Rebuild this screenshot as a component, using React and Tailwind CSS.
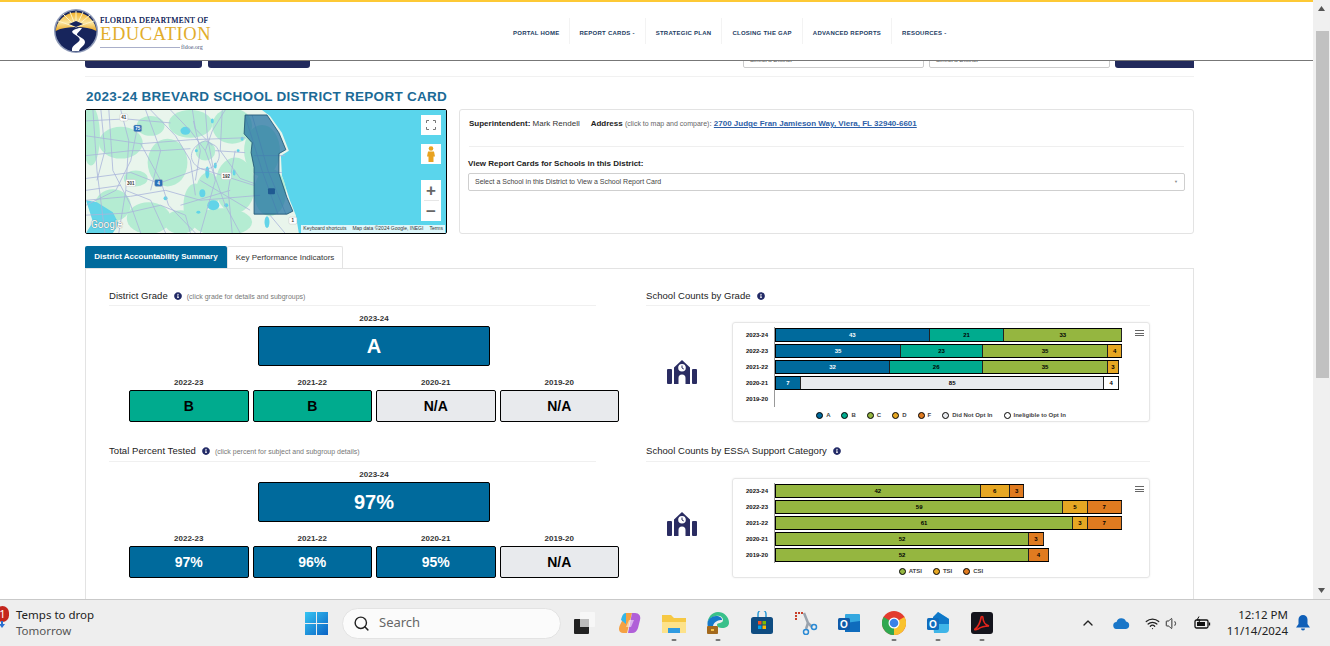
import React from 'react';
import { ChevronUp, Search, Volume1, Wifi } from 'lucide-react';
import { FaInfoCircle } from 'react-icons/fa';

const BLUE = 'bg-[#006a9c] text-white';
const TEAL = 'bg-[#00ab8e] text-black';
const NA = 'bg-[#e8eaed] text-black';

const COLORS = {
  A: 'bg-[#006a9c] text-white',
  B: 'bg-[#00ab8e] text-black',
  C: 'bg-[#95b640] text-black',
  D: 'bg-[#e6a723] text-black',
  F: 'bg-[#e07b20] text-black',
  N: 'bg-[#e8eaed] text-black',
  W: 'bg-white text-black',
};

const gradeRows = [
  { year: '2023-24', segs: [['A', 43], ['B', 21], ['C', 33]] },
  { year: '2022-23', segs: [['A', 35], ['B', 23], ['C', 35], ['D', 4]] },
  { year: '2021-22', segs: [['A', 32], ['B', 26], ['C', 35], ['D', 3]] },
  { year: '2020-21', segs: [['A', 7], ['N', 85], ['W', 4]] },
  { year: '2019-20', segs: [] },
];

const essaRows = [
  { year: '2023-24', segs: [['C', 42], ['D', 6], ['F', 3]] },
  { year: '2022-23', segs: [['C', 59], ['D', 5], ['F', 7]] },
  { year: '2021-22', segs: [['C', 61], ['D', 3], ['F', 7]] },
  { year: '2020-21', segs: [['C', 52], ['F', 3]] },
  { year: '2019-20', segs: [['C', 52], ['F', 4]] },
];

const gradeLegend = [
  ['A', 'A'], ['B', 'B'], ['C', 'C'], ['D', 'D'], ['F', 'F'],
  ['N', 'Did Not Opt In'], ['W', 'Ineligible to Opt In'],
];
const essaLegend = [['C', 'ATSI'], ['D', 'TSI'], ['F', 'CSI']];

function Logo() {
  return (
    <div className="flex items-start w-[157px]">
      <svg width="46" height="44" viewBox="0 0 46 44" className="shrink-0">
        <defs>
          <linearGradient id="sky" x1="0" y1="0" x2="0" y2="1">
            <stop offset="0" stopColor="#f3b12a" />
            <stop offset="0.55" stopColor="#fbe6a0" />
            <stop offset="1" stopColor="#e9a520" />
          </linearGradient>
        </defs>
        <circle cx="23" cy="22" r="22" fill="#8f9bb8" />
        <circle cx="23" cy="22" r="20.5" fill="#17255c" />
        <path d="M2.6 22a20.5 20.5 0 0 1 40.8 0c-6-3-12-4-20-4s-15 1-20.800 4z" fill="url(#sky)" />
        <path d="M23 18 L10 5 M23 18 L17 3 M23 18 V2 M23 18 L30 3 M23 18 L37 6 M23 18 L41 12 M23 18 L5 12" stroke="#fff3c4" strokeWidth="1" />
        <path d="M16 15l7-3 7 3-7 3z" fill="#17255c" />
        <path d="M26 19c-6 2-9 3-5 6s9 5 3 9-5 6-5 8h7c1-4 6-5 6-9s-9-6-8-8 3-3 5-6z" fill="#fff" />
      </svg>
      <div className="ml-[1px] w-[110px] font-['Liberation_Serif',serif] leading-none">
        <div className="mt-[8px] text-[8px] h-[8px] leading-[8px] tracking-[0.36px] text-[#1d2c5e] [text-shadow:0_0_0.3px_#1d2c5e] whitespace-nowrap">FLORIDA DEPARTMENT OF</div>
        <div className="text-[18.500px] h-[18px] leading-[18px] text-[#e2ad2b] tracking-[0.6px] whitespace-nowrap">EDUCATION</div>
        <div className="mt-[1px] flex items-center gap-[1px]">
          <div className="w-[80px] h-px bg-[#a9afc9]" />
          <div className="text-[6px] text-[#4a5578]">fldoe.org</div>
        </div>
      </div>
    </div>
  );
}

function NavItem({ label, className }) {
  return (
    <div className={`flex items-center h-[26px] pt-[4px] border-r border-[#f3f3f3] text-[6px] font-bold tracking-[0.25px] text-[#1c3b62] whitespace-nowrap ${className}`}>
      {label}
    </div>
  );
}

function MapView() {
  const roads = [
    'M92 109 L96 170 L104 233', 'M108 109 L112 170 L130 205 L140 233', 'M120 109 L128 140 L125 190 L118 233',
    'M137 125 L130 160 L115 190 L85 205', 'M170 109 L190 130 L205 150 L225 205 L240 233',
    'M205 109 L207 135 L215 180 L200 233', 'M85 135 L140 143 L190 139 L245 137', 'M85 178 L130 172 L158 183 L200 168 L254 185',
    'M85 200 L130 196 L165 190 L200 200 L260 195', 'M150 109 L175 135 L190 160 L195 195', 'M245 115 L262 170 L278 214',
    'M252 114 L268 170 L286 214', 'M222 109 L220 150 L240 178 L254 183', 'M254 155 L285 155', 'M254 172 L282 172',
    'M140 143 L160 180 L168 205 L195 233', 'M270 215 L285 233', 'M85 215 L125 213 L160 205',
    'M205 140 C 190 145 185 160 200 168 C 215 172 225 155 215 145 Z', 'M100 109 L104 150 L96 180', 'M85 155 L130 150 L160 150 L190 148',
    'M193 120 L200 150 L195 180', 'M160 205 L185 215 L190 233', 'M125 190 L150 200 L165 233', 'M215 150 L245 152',
    'M225 109 L212 130 L205 150', 'M192 109 L195 128 L212 145', 'M85 120 L125 118 L170 122', 'M180 205 L230 190',
    'M145 109 L160 150 L150 190', 'M235 150 L228 190 L232 233', 'M85 190 L120 185', 'M200 180 L250 210',
  ];
  const blobs = [
    [90, 135, 9, 30], [120, 142, 22, 16], [167, 162, 20, 24], [190, 123, 22, 14], [232, 125, 20, 18],
    [235, 185, 20, 28], [195, 205, 12, 22], [112, 205, 18, 16], [148, 218, 22, 16], [222, 222, 30, 14],
    [180, 222, 16, 12], [150, 125, 14, 10], [135, 178, 12, 8], [208, 190, 12, 18], [262, 150, 18, 26], [270, 192, 16, 24],
    [205, 150, 10, 10],
  ];
  const lakes = [
    [185, 130, 5, 4], [207, 172, 2, 6], [213, 205, 6, 5], [202, 193, 3, 4], [165, 198, 2, 2], [215, 165, 1.5, 3],
    [267, 222, 2.5, 6], [242, 138, 1.500, 2], [234, 172, 1.500, 3], [196, 150, 1.500, 1.500], [226, 205, 2, 2],
    [198, 212, 2, 1.500], [238, 150, 1.500, 1.500], [212, 120, 1.500, 2.500],
  ];
  return (
    <svg viewBox="85 109 362 124" preserveAspectRatio="none" className="block w-full h-full">
      <rect x="85" y="109" width="362" height="124" fill="#5ad5ec" />
      <g className="blur-[0.5px]">
        <path d="M85 109 L262 109 L270 115 L282 132 L289 150 L281 155 L282 175 L290 200 L296 215 L299 233 L85 233 Z" fill="#e9f5ec" />
        {blobs.map(([cx, cy, rx, ry]) => <ellipse key={`${cx}-${cy}`} cx={cx} cy={cy} rx={rx} ry={ry} fill="#b4ecd2" />)}
        {lakes.map(([cx, cy, rx, ry]) => <ellipse key={`${cx}-${cy}`} cx={cx} cy={cy} rx={rx} ry={ry} fill="#62d4e8" />)}
        <path d="M85 200 L96 202 L112 212 L118 224 L112 233 L85 233 L92 222 Z" fill="#62d4e8" />
        {roads.map((d) => <path key={d} d={d} fill="none" stroke="#a9b5da" strokeWidth="0.8" />)}
      </g>
      <path
        d="M245 114 L267 114 L279 132 L286 149 L279 153 L279 173 L287 197 L293 211 L287 214 L254 214 L254 167 L251 152 L252 142 L244 133 Z"
        fill="#1f6f9f" fillOpacity="0.72" stroke="#1c4f6e" strokeWidth="0.8"
      />
      <rect x="268" y="188" width="7" height="6" rx="1" fill="#1f5a92" />
      {[
        [119, 113, 8, '41', '#fff', '#333'], [133, 124, 8, '75', '#2a6fb8', '#fff'], [125, 179, 10, '301', '#fff', '#333'],
        [154, 179, 8, '4', '#2a6fb8', '#fff'], [221, 172, 10, '192', '#fff', '#333'], [289, 217, 8, '1', '#fff', '#333'],
      ].map(([x, y, w, t, bg, fg]) => (
        <g key={t}>
          <rect x={x} y={y} width={w} height="7" rx="1.5" fill={bg} stroke="#bbb" strokeWidth="0.4" />
          <text x={x + w / 2} y={y + 5.2} textAnchor="middle" fontSize="4.500" fontWeight="700" fill={fg} fontFamily="Liberation Sans">{t}</text>
        </g>
      ))}
    </svg>
  );
}

function MapPanel() {
  return (
    <div className="relative w-[362px] h-[125px] shrink-0 border border-black rounded-[2px] overflow-hidden">
      <MapView />
      <div className="absolute left-[5px] bottom-[3px] text-[10px] leading-none text-white [text-shadow:0_0_1px_#555] font-['Roboto',sans-serif]">Google</div>
      <div className="absolute right-[1px] top-[115px] h-[8px] px-[2px] flex items-center gap-[6px] bg-white/80 text-[5px] text-[#333] whitespace-nowrap">
        <span>Keyboard shortcuts</span>
        <span>Map data ©2024 Google, INEGI</span>
        <span>Terms</span>
      </div>
      <div className="absolute left-[335px] top-[5px] w-[20px] h-[20px] bg-white flex items-center justify-center">
        <svg width="10" height="10" viewBox="0 0 10 10" fill="none" stroke="#777" strokeWidth="1">
          <path d="M0.500 3V0.500H3M7 0.500H9.500V3M9.500 7V9.500H7M3 9.500H0.500V7" />
        </svg>
      </div>
      <div className="absolute left-[335px] top-[34px] w-[20px] h-[20px] bg-white flex items-center justify-center">
        <svg width="10" height="16" viewBox="0 0 10 16" fill="#e8a21f">
          <circle cx="5" cy="2.500" r="2.300" />
          <path d="M2 5.500h6l1 5H7.500V16h-5v-5.500H1z" />
        </svg>
      </div>
      <div className="absolute left-[335px] top-[70px] w-[20px] h-[41px] bg-white flex flex-col items-center text-[#666]">
        <div className="h-[20px] flex items-center text-[17px] leading-none font-bold">+</div>
        <div className="w-[15px] h-px bg-[#e6e6e6]" />
        <div className="h-[20px] flex items-center text-[17px] leading-none font-bold">−</div>
      </div>
    </div>
  );
}

function InfoPanel() {
  return (
    <div className="flex-1 h-[125px] ml-[12px] border border-[#e3e3e3] rounded-[3px] px-[9px]">
      <div className="h-[37px] border-b border-[#efefef] pt-[8px] text-[8px] leading-[12px] text-[#333] whitespace-nowrap">
        <span className="font-bold text-[#222]">Superintendent:</span> Mark Rendell
        <span className="ml-[11px] font-bold text-[#222]">Address</span>{' '}
        <span className="text-[7px] text-[#666]">(click to map and compare)</span>:{' '}
        <span className="font-bold text-[#2e5fa8] underline">2700 Judge Fran Jamieson Way, Viera, FL 32940-6601</span>
      </div>
      <div className="mt-[11px] -ml-px text-[8px] leading-[12px] font-bold text-[#222]">View Report Cards for Schools in this District:</div>
      <div className="mt-[3px] -mx-px h-[18px] border border-[#cfcfcf] rounded-[2px] flex items-center justify-between px-[6px] text-[7px] text-[#444]">
        <span>Select a School in this District to View a School Report Card</span>
        <span className="text-[4px] text-[#888]">▼</span>
      </div>
    </div>
  );
}

function Heading({ title, note, className }) {
  return (
    <div className={`flex items-center gap-[5px] border-b border-[#f0f0f0] whitespace-nowrap ${className}`}>
      <span className="text-[9.500px] leading-none text-[#222] tracking-[0.05px]">{title}</span>
      <FaInfoCircle className="w-[8px] h-[8px] text-[#222a66] ml-[1px]" />
      {note && <span className="text-[7px] leading-none text-[#777]">{note}</span>}
    </div>
  );
}

function Tile({ year, value, tone, big }) {
  return (
    <div className={big ? 'w-[232px]' : 'flex-1'}>
      <div className="h-[12px] text-center text-[8px] leading-[12px] font-bold text-[#333]">{year}</div>
      <div className={`mt-px flex items-center justify-center border border-black rounded-[2px] font-bold ${tone} ${big ? 'h-[40px] text-[20px]' : 'h-[32px] text-[14px]'}`}>
        {value}
      </div>
    </div>
  );
}

function TileGroup({ top, rest }) {
  return (
    <div className="mt-[7px] ml-[20px] w-[490px]">
      <div className="flex justify-center">
        <Tile year={top.year} value={top.value} tone={top.tone} big />
      </div>
      <div className="mt-[11px] flex gap-[4px]">
        {rest.map((t) => <Tile key={t.year} year={t.year} value={t.value} tone={t.tone} />)}
      </div>
    </div>
  );
}

function SchoolIcon({ className }) {
  return (
    <svg width="30" height="24" viewBox="0 0 30 24" fill="#2a2c62" className={`shrink-0 ${className}`}>
      <rect x="0" y="9" width="5" height="15" rx="1" />
      <rect x="25" y="9" width="5" height="15" rx="1" />
      <path fillRule="evenodd" d="M7 24V7.500L15 0l8 7.500V24H18.500v-6a3.500 3.500 0 0 0-7 0v6zM15 4a3.800 3.800 0 1 0 0 7.600A3.800 3.800 0 0 0 15 4z" />
      <path d="M15 5.500v2.500l1.800 1" fill="none" stroke="#2a2c62" strokeWidth="1" />
    </svg>
  );
}

function BarChart({ rows, legend, scale }) {
  return (
    <div className="relative w-[418px] h-[100px] border border-[#e6e6e6] rounded-[3px] shadow-[0_0_2px_rgba(0,0,0,0.08)] pt-[4px]">
      {rows.map((r) => (
        <div key={r.year} className="flex h-[16px] items-center">
          <div className="w-[35px] text-right text-[6px] font-bold text-[#111]">{r.year}</div>
          <div className="ml-[6px] h-[16px] flex items-center border-l border-[#999]">
            {r.segs.length > 0 && (
              <div className="flex h-[14px] border-y border-l border-black">
                {r.segs.map(([key, n], i) => (
                  <div
                    key={i}
                    style={{ width: n * scale }}
                    className={`flex items-center justify-center border-r border-[#222] text-[6px] font-bold ${COLORS[key]}`}
                  >
                    {n}
                  </div>
                ))}
              </div>
            )}
          </div>
        </div>
      ))}
      <div className="mt-[2px] h-[12px] flex items-center justify-center gap-[11px]">
        {legend.map(([key, label]) => (
          <div key={label} className="flex items-center gap-[3px] text-[6px] font-bold text-[#444]">
            <span className={`w-[7px] h-[7px] rounded-full border border-black ${COLORS[key].split(' ')[0]}`} />
            {label}
          </div>
        ))}
      </div>
      <div className="absolute right-[5px] top-[7px] w-[9px] h-[6px] border-y border-[#666] flex items-center">
        <div className="w-full h-px bg-[#666]" />
      </div>
    </div>
  );
}

function ChartBlock({ rows, legend, scale, className, iconClass }) {
  return (
    <div className={`flex items-center ${className}`}>
      <div className="w-[86px] pl-[21px]"><SchoolIcon className={iconClass} /></div>
      <BarChart rows={rows} legend={legend} scale={scale} />
    </div>
  );
}

function TaskDot() {
  return <div className="absolute left-1/2 -translate-x-1/2 top-[28px] w-[5px] h-[2px] rounded-full bg-[#777]" />;
}

function TaskIcon({ dot, className, children }) {
  return (
    <div className={`relative w-[24px] h-[24px] shrink-0 ${className}`}>
      {children}
      {dot && <TaskDot />}
    </div>
  );
}

function Taskbar() {
  return (
    <div className="h-[47px] shrink-0 bg-[#eeeeee] border-t border-[#c9c9c9] flex items-center font-['Noto_Sans',sans-serif]">
      <div className="relative w-[305px] h-full shrink-0">
        <div className="absolute -left-[4px] top-[6px] w-[13px] h-[16px] rounded-full bg-[#c4261d] text-white text-[11px] leading-[16px] text-center">1</div>
        <svg className="absolute -left-[1px] top-[21px]" width="6" height="7" viewBox="0 0 6 7" fill="#2a6fd0">
          <path d="M2 0h2v3h2L3 7 0 3h2z" />
        </svg>
        <div className="absolute left-[16px] top-[6px] text-[11.500px] leading-[17px] text-[#222]">Temps to drop</div>
        <div className="absolute left-[16px] top-[22px] text-[11.500px] leading-[17px] text-[#555]">Tomorrow</div>
      </div>
      <svg width="23" height="23" viewBox="0 0 23 23" className="shrink-0">
        <defs>
          <linearGradient id="win" x1="0" y1="0" x2="1" y2="1">
            <stop offset="0" stopColor="#35c5f3" />
            <stop offset="1" stopColor="#0a62c4" />
          </linearGradient>
        </defs>
        <path d="M0 0h11v11H0zM12 0h11v11H12zM0 12h11v11H0zM12 12h11v11H12z" fill="url(#win)" />
      </svg>
      <div className="ml-[14px] w-[219px] h-[31px] rounded-full bg-[#fbfbfb] border border-[#e3e3e3] flex items-center pl-[10px] shrink-0">
        <Search className="w-[17px] h-[17px] text-[#222]" strokeWidth={2} />
        <span className="ml-[9px] text-[13px] text-[#666]">Search</span>
      </div>
      <TaskIcon className="ml-[12px]">
        <svg width="24" height="24" viewBox="0 0 24 24">
          <rect x="7" y="1" width="15" height="15" rx="1" fill="#f7f7f7" />
          <rect x="1" y="8" width="15" height="15" rx="1" fill="#222" />
          <rect x="7" y="8" width="9" height="8" fill="#bbb" />
        </svg>
      </TaskIcon>
      <TaskIcon className="ml-[21px]">
        <svg width="24" height="24" viewBox="0 0 24 24">
          <path d="M8 2h6l-5 20H5C1 22 0 18 2 14z" fill="#f5a142" />
          <path d="M8 2c-3 0-4 3-5 7l5 4z" fill="#33b6e8" />
          <path d="M14 2h3c4 0 6 3 5 7l-2 8c-1 3-3 5-6 5h-4z" fill="#b05fd8" />
          <path d="M11 9h5l-3 7H8z" fill="#fff" fillOpacity="0.5" />
        </svg>
      </TaskIcon>
      <TaskIcon dot className="ml-[20px]">
        <svg width="24" height="24" viewBox="0 0 24 24">
          <path d="M0 4h9l3 3h12v15H0z" fill="#f6c843" />
          <path d="M0 11h24v11H0z" fill="#fde28a" />
          <path d="M6 17h12v5H6z" fill="#2f9ae0" />
        </svg>
      </TaskIcon>
      <TaskIcon dot className="ml-[20px]">
        <svg width="24" height="24" viewBox="0 0 24 24">
          <path d="M12 1a11 11 0 0 1 11 11c0 3-3 5-7 5-3 0-5-1-5-3 0-3 6-1 6-5 0-3-3-5-7-4C5 6 2 9 1.500 12 2 6 6 1 12 1z" fill="#39c08a" />
          <path d="M1.500 12C2 8 6 5 10 5c4 0 6 2 6 4-3 0-8 1-9 6 0 3 1 6 5 8C6 23 1 18 1.500 12z" fill="#1579c9" />
          <rect x="1" y="15" width="11" height="8" rx="1" fill="#a3691d" />
          <rect x="5" y="18" width="3" height="2" fill="#f3c24b" />
        </svg>
      </TaskIcon>
      <TaskIcon className="ml-[20px]">
        <svg width="24" height="24" viewBox="0 0 24 24">
          <path d="M8 6V3a4 4 0 0 1 8 0v3" fill="none" stroke="#2b9ad8" strokeWidth="1.500" />
          <rect x="1" y="6" width="22" height="17" rx="2.500" fill="#0f4c81" />
          <rect x="8" y="10" width="3.500" height="3.500" fill="#f25022" />
          <rect x="12.500" y="10" width="3.500" height="3.500" fill="#7fba00" />
          <rect x="8" y="14.500" width="3.500" height="3.500" fill="#00a4ef" />
          <rect x="12.500" y="14.500" width="3.500" height="3.500" fill="#ffb900" />
        </svg>
      </TaskIcon>
      <TaskIcon className="ml-[20px]">
        <svg width="24" height="24" viewBox="0 0 24 24" fill="none">
          <path d="M9 2H2v8" stroke="#c8402a" strokeWidth="2" strokeDasharray="2 1" />
          <path d="M10 2l4 10 4 4" stroke="#9aa3ad" strokeWidth="2.500" />
          <path d="M14 12l-2 6" stroke="#9aa3ad" strokeWidth="2.500" />
          <circle cx="20" cy="16" r="2.500" stroke="#2a8ad4" strokeWidth="1.500" />
          <circle cx="12" cy="21" r="2.500" stroke="#2a8ad4" strokeWidth="1.500" />
        </svg>
      </TaskIcon>
      <TaskIcon className="ml-[19px]">
        <svg width="24" height="24" viewBox="0 0 24 24">
          <rect x="8" y="3" width="15" height="18" rx="1" fill="#35a8e0" />
          <path d="M8 12l15-2v11H8z" fill="#0f6cbd" />
          <rect x="1" y="7" width="12" height="12" rx="1.500" fill="#0f5aa8" />
          <text x="7" y="16.500" textAnchor="middle" fontSize="10" fontWeight="700" fill="#fff" fontFamily="Liberation Sans">O</text>
        </svg>
      </TaskIcon>
      <TaskIcon dot className="ml-[21px]">
        <svg width="24" height="24" viewBox="0 0 24 24">
          <circle cx="12" cy="12" r="12" fill="#e33b2e" />
          <path d="M12 12L22.400 6A12 12 0 0 1 12 24z" fill="#f9c22e" />
          <path d="M12 12L12 24A12 12 0 0 1 1.600 6z" fill="#2fa84f" />
          <circle cx="12" cy="12" r="5.500" fill="#fff" />
          <circle cx="12" cy="12" r="4.300" fill="#3b82e8" />
        </svg>
      </TaskIcon>
      <TaskIcon dot className="ml-[20px]">
        <svg width="24" height="24" viewBox="0 0 24 24">
          <path d="M12 1l11 7v10a4 4 0 0 1-4 4H8l-1-9z" fill="#3fb5e8" />
          <path d="M12 1L7 6v7h16V8z" fill="#0f78c8" />
          <rect x="1" y="7" width="12" height="12" rx="1.500" fill="#0f6cbd" />
          <text x="7" y="16.500" textAnchor="middle" fontSize="10" fontWeight="700" fill="#fff" fontFamily="Liberation Sans">O</text>
        </svg>
      </TaskIcon>
      <TaskIcon dot className="ml-[20px]">
        <svg width="24" height="24" viewBox="0 0 24 24">
          <rect x="1" y="1" width="22" height="22" rx="3" fill="#14141c" />
          <path d="M5 18c3-2 5-6 6-11 0-2 2-2 2 0 0 4 3 7 6 8-4 0-8 1-11 3-2 1-4 1-3 0z" fill="none" stroke="#e3241b" strokeWidth="1.600" />
        </svg>
      </TaskIcon>
      <div className="ml-[86px] flex items-center shrink-0">
        <ChevronUp className="w-[16px] h-[16px] text-[#222]" strokeWidth={2} />
        <svg className="ml-[17px]" width="17" height="11" viewBox="0 0 17 11">
          <path d="M4 11a3.500 3.500 0 0 1-.5-7A5 5 0 0 1 13 3.500a3.800 3.800 0 0 1 0 7.500z" fill="#1976c8" />
        </svg>
        <Wifi className="ml-[15px] w-[15px] h-[15px] text-[#222]" strokeWidth={2} />
        <Volume1 className="ml-[5px] w-[15px] h-[15px] text-[#222]" strokeWidth={1.500} />
        <svg className="ml-[14px]" width="17" height="14" viewBox="0 0 17 14" fill="none" stroke="#111" strokeWidth="1.300">
          <rect x="1" y="4" width="13" height="8" rx="1.500" />
          <path d="M15.500 6.500v3" />
          <rect x="3" y="6" width="8" height="4" fill="#111" stroke="none" />
          <path d="M5 0.500L3 4h3L4.500 7" strokeWidth="1" />
        </svg>
      </div>
      <div className="ml-[7px] w-[70px] text-right text-[11.500px] leading-[16px] text-[#222] shrink-0">
        <div>12:12 PM</div>
        <div>11/14/2024</div>
      </div>
      <svg className="ml-[8px] shrink-0" width="14" height="16" viewBox="0 0 14 16" fill="#0f5fb8">
        <path d="M7 0a4.500 4.500 0 0 0-4.500 4.500V9L0 12.500h14L11.500 9V4.500A4.500 4.500 0 0 0 7 0z" />
        <path d="M5 13.500h4a2 2 0 0 1-4 0z" />
      </svg>
    </div>
  );
}

export default function App() {
  return (
    <div className="w-[1330px] h-[646px] overflow-hidden flex flex-col bg-white font-['Liberation_Sans',sans-serif]">
      <div className="flex-1 min-h-0 flex">
        <div className="flex-1 min-w-0 flex flex-col">
          <div className="h-[2px] bg-[#fdc935] shrink-0" />
          {/* Fixed header */}
          <div className="h-[59px] shrink-0 flex items-center border-b border-[#777]">
            <div className="ml-[53px]"><Logo /></div>
            <div className="ml-[293px] flex">
              <NavItem label="PORTAL HOME" className="pl-[10px] pr-[9px]" />
              <NavItem label="REPORT CARDS -" className="px-[10px]" />
              <NavItem label="STRATEGIC PLAN" className="px-[10px]" />
              <NavItem label="CLOSING THE GAP" className="px-[10px]" />
              <NavItem label="ADVANCED REPORTS" className="px-[10px]" />
              <NavItem label="RESOURCES -" className="px-[10px] border-r-0" />
            </div>
          </div>
          {/* Page content, cut by the header and the taskbar */}
          <div className="flex-1 min-h-0 overflow-hidden px-[85px] w-[1313px]">
            <div className="w-[1109px]">
              <div className="h-[16px] border-b border-[#f1f1f1]">
                <div className="h-[7px] overflow-hidden flex items-end">
                  <div className="w-[117px] h-[30px] shrink-0 rounded-[3px] bg-[#222a5c]" />
                  <div className="ml-[6px] w-[102px] h-[30px] shrink-0 rounded-[3px] bg-[#222a5c]" />
                  <div className="ml-[433px] w-[181px] h-[30px] shrink-0 rounded-[2px] border border-[#ccc] pt-[15px] pl-[6px] text-[6px] leading-[12px] text-[#555]">Select a District</div>
                  <div className="ml-[5px] w-[181px] h-[30px] shrink-0 rounded-[2px] border border-[#ccc] pt-[15px] pl-[6px] text-[6px] leading-[12px] text-[#555]">Select a District</div>
                  <div className="ml-[5px] w-[81px] h-[30px] shrink-0 rounded-[3px] bg-[#222a5c]" />
                </div>
              </div>
              <div className="h-[32px] pt-[11px] pl-px text-[13.500px] leading-[18px] font-bold tracking-[0.28px] text-[#1b6a96] whitespace-nowrap">
                2023-24 BREVARD SCHOOL DISTRICT REPORT CARD
              </div>
              <div className="flex">
                <MapPanel />
                <InfoPanel />
              </div>
              <div className="mt-[12px] flex h-[22px]">
                <div className="w-[142px] flex items-center justify-center rounded-t-[2px] bg-[#006a9c] text-white text-[8px] font-bold">District Accountability Summary</div>
                <div className="w-[116px] flex items-center justify-center rounded-t-[2px] border border-b-0 border-[#e3e3e3] text-[8px] text-[#333]">Key Performance Indicators</div>
              </div>
              <div className="h-[340px] border border-[#e3e3e3] pt-[18px] pl-[23px] flex">
                <div className="w-[537px] shrink-0">
                  <Heading title="District Grade" note="(click grade for details and subgroups)" className="w-[487px] h-[19px]" />
                  <TileGroup
                    top={{ year: '2023-24', value: 'A', tone: BLUE }}
                    rest={[
                      { year: '2022-23', value: 'B', tone: TEAL },
                      { year: '2021-22', value: 'B', tone: TEAL },
                      { year: '2020-21', value: 'N/A', tone: NA },
                      { year: '2019-20', value: 'N/A', tone: NA },
                    ]}
                  />
                  <div className="mt-[20px]">
                    <Heading title="Total Percent Tested" note="(click percent for subject and subgroup details)" className="w-[487px] h-[20px] pb-px" />
                  </div>
                  <TileGroup
                    top={{ year: '2023-24', value: '97%', tone: BLUE }}
                    rest={[
                      { year: '2022-23', value: '97%', tone: BLUE },
                      { year: '2021-22', value: '96%', tone: BLUE },
                      { year: '2020-21', value: '95%', tone: BLUE },
                      { year: '2019-20', value: 'N/A', tone: NA },
                    ]}
                  />
                </div>
                <div className="w-[504px] shrink-0">
                  <Heading title="School Counts by Grade" className="h-[19px]" />
                  <ChartBlock rows={gradeRows} legend={gradeLegend} scale={3.57} className="mt-[16px]" />
                  <div className="mt-[20px]">
                    <Heading title="School Counts by ESSA Support Category" className="h-[20px] pb-px" />
                  </div>
                  <ChartBlock rows={essaRows} legend={essaLegend} scale={4.87} className="mt-[16px]" iconClass="-mt-[8px]" />
                </div>
              </div>
            </div>
          </div>
        </div>
        {/* Browser scrollbar */}
        <div className="w-[17px] shrink-0 bg-[#f0f0f0] flex flex-col">
          <div className="h-[17px] flex items-center justify-center">
            <svg width="7" height="5" viewBox="0 0 7 5" fill="#555"><path d="M3.500 0L7 5H0z" /></svg>
          </div>
          <div className="mt-[14px] ml-[3px] w-[13px] h-[347px] bg-[#c1c1c1]" />
          <div className="mt-auto h-[17px] flex items-center justify-center">
            <svg width="7" height="5" viewBox="0 0 7 5" fill="#555"><path d="M0 0H7L3.500 5z" /></svg>
          </div>
        </div>
      </div>
      <Taskbar />
    </div>
  );
}
